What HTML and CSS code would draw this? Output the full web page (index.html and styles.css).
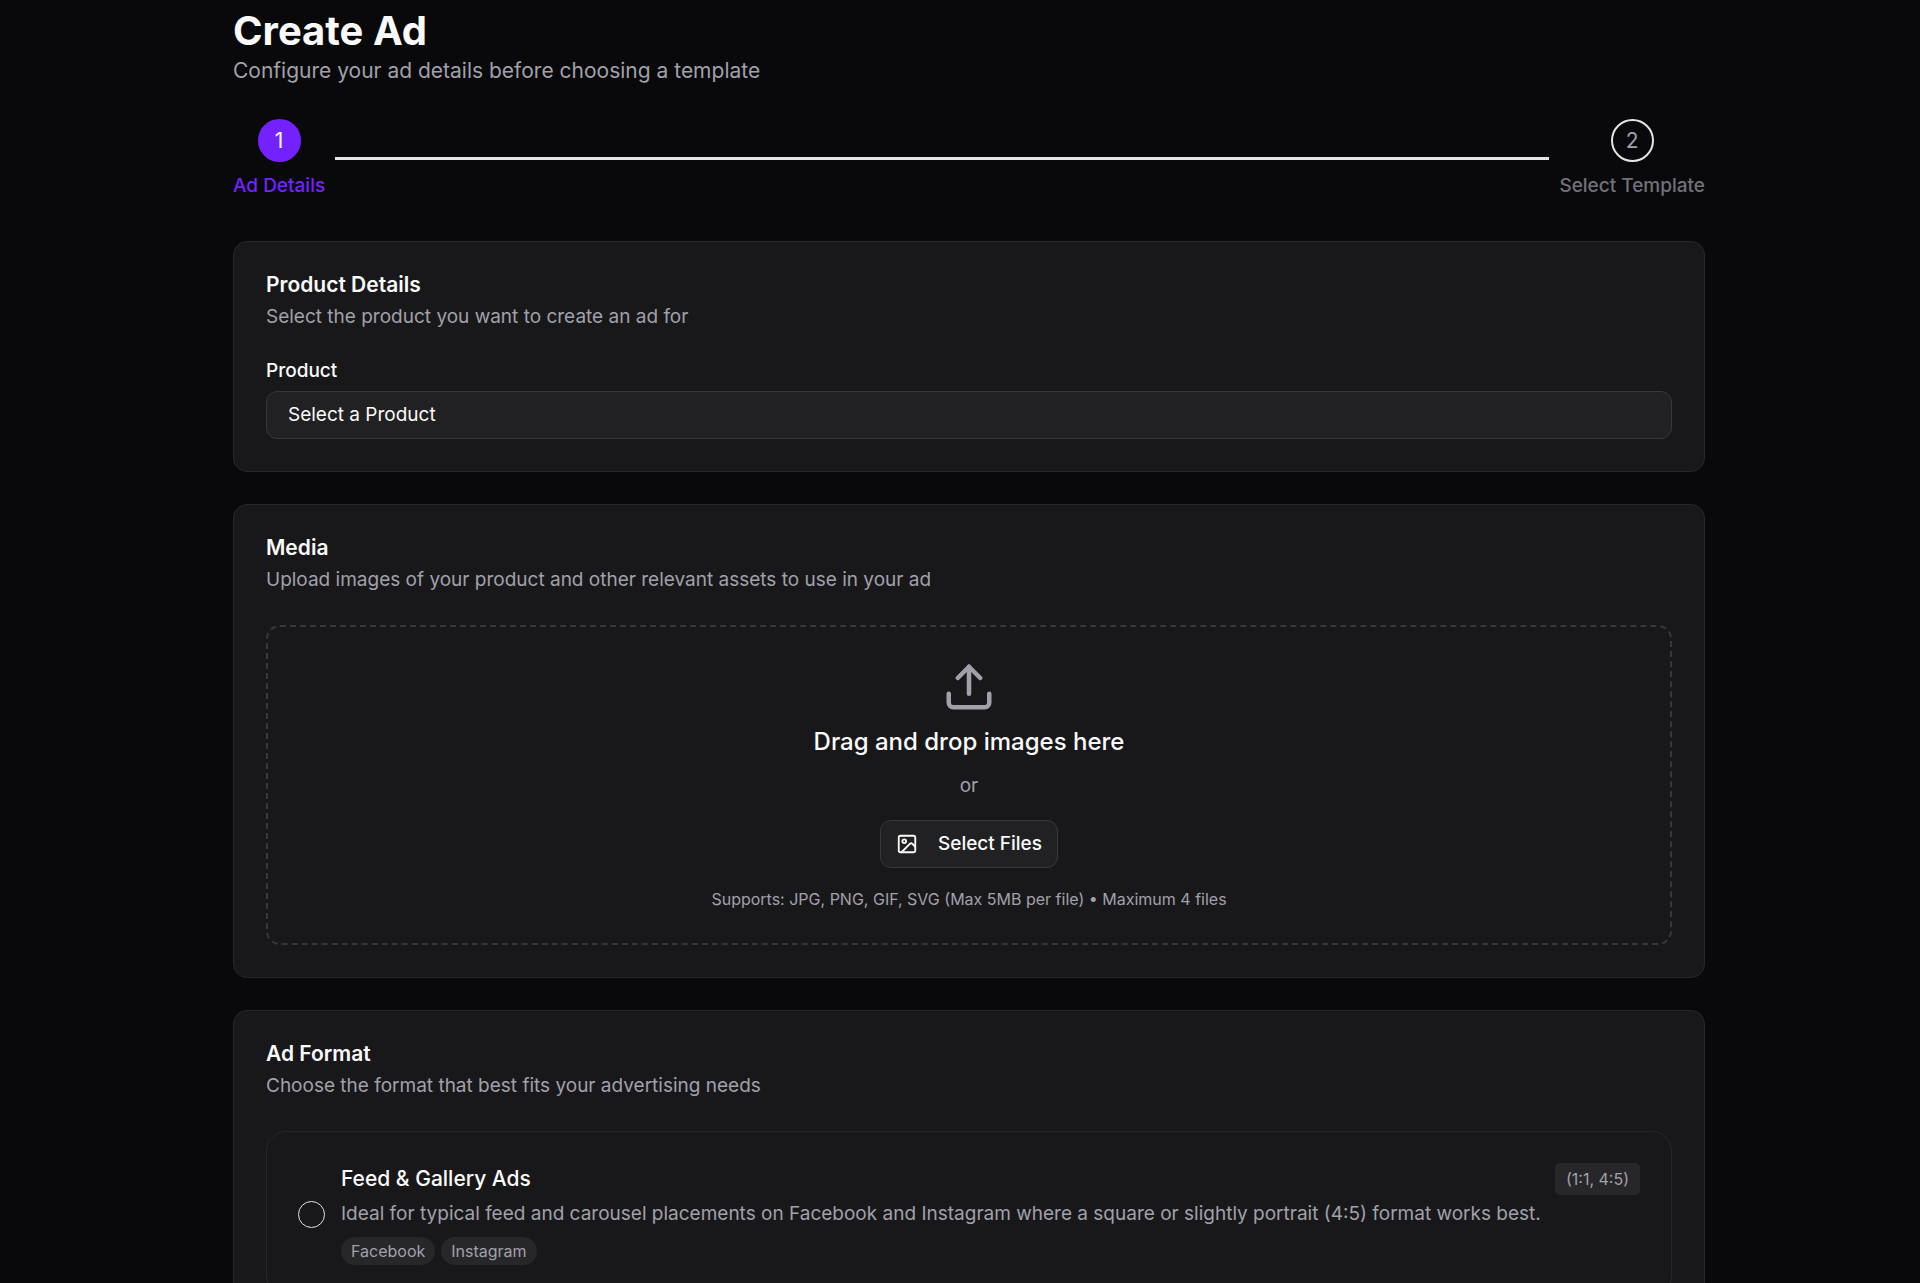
FILE: index.html
```html
<!DOCTYPE html>
<html lang="en">
<head>
    <meta charset="UTF-8">
    <meta name="viewport" content="width=device-width, initial-scale=1.0">
    <title>Create Ad</title>
    <link rel="stylesheet" href="styles.css">
</head>
<body>
    <main class="page">
        <header class="page-header">
            <h1>Create Ad</h1>
            <p>Configure your ad details before choosing a template</p>
        </header>

        <ol class="steps">
            <li class="step active">
                <span class="step-number">1</span>
                <span class="step-label">Ad Details</span>
            </li>
            <li class="step-line" aria-hidden="true"></li>
            <li class="step">
                <span class="step-number">2</span>
                <span class="step-label">Select Template</span>
            </li>
        </ol>

        <form class="cards">
            <section class="card">
                <h2>Product Details</h2>
                <p class="card-text">Select the product you want to create an ad for</p>
                <label class="field-label" for="product">Product</label>
                <select id="product" class="select">
                    <option>Select a Product</option>
                </select>
            </section>

            <section class="card">
                <h2>Media</h2>
                <p class="card-text">Upload images of your product and other relevant assets to use in your ad</p>
                <div class="dropzone">
                    <svg class="upload-icon" viewBox="0 0 24 24" aria-hidden="true">
                        <path d="M21 15v4a2 2 0 0 1-2 2H5a2 2 0 0 1-2-2v-4"/>
                        <path d="M17 8l-5-5-5 5"/>
                        <path d="M12 3v12"/>
                    </svg>
                    <h3>Drag and drop images here</h3>
                    <p class="or">or</p>
                    <button type="button" class="button">
                        <svg class="button-icon" viewBox="0 0 24 24" aria-hidden="true">
                            <rect x="3" y="3" width="18" height="18" rx="2"/>
                            <circle cx="9" cy="9" r="2"/>
                            <path d="M21 15l-3.1-3.1a2 2 0 0 0-2.8 0L6 21"/>
                        </svg>
                        Select Files
                    </button>
                    <p class="hint">Supports: JPG, PNG, GIF, SVG (Max 5MB per file) • Maximum 4 files</p>
                </div>
            </section>

            <section class="card">
                <h2>Ad Format</h2>
                <p class="card-text">Choose the format that best fits your advertising needs</p>
                <div class="format">
                    <input type="radio" id="feed" name="format" class="radio">
                    <div class="format-body">
                        <div class="format-top">
                            <label for="feed">Feed &amp; Gallery Ads</label>
                            <span class="ratio">(1:1, 4:5)</span>
                        </div>
                        <p>Ideal for typical feed and carousel placements on Facebook and Instagram where a square or slightly portrait (4:5) format works best.</p>
                        <div class="tags">
                            <span class="tag">Facebook</span>
                            <span class="tag">Instagram</span>
                        </div>
                    </div>
                </div>
            </section>
        </form>
    </main>
</body>
</html>
```
FILE: styles.css
```css
* {
    box-sizing: border-box;
}

body {
    margin: 0;
    padding-left: 18px;
    background: #09090b;
    color: #fafafa;
    font-family: Inter, sans-serif;
    font-size: 19px;
    line-height: 28px;
}

h1, h2, h3, p {
    margin: 0;
}

.page {
    max-width: 1472px;
    margin: 0 auto;
    padding: 7px 0 32px;
}

/* Header */
h1 {
    font-size: 40px;
    line-height: 48px;
    font-weight: 700;
}

.page-header p {
    font-size: 21px;
    line-height: 32px;
    color: #a1a1aa;
}

/* Steps */
.steps {
    display: flex;
    align-items: center;
    gap: 10px;
    margin: 32px 0 43px;
    padding: 0;
    list-style: none;
}

.step {
    display: flex;
    flex-direction: column;
    align-items: center;
    gap: 12px;
    color: #71717a;
}

.step-number {
    display: flex;
    align-items: center;
    justify-content: center;
    width: 43px;
    height: 43px;
    border: 2px solid #e4e4e7;
    border-radius: 50%;
    font-size: 21px;
    color: #a1a1aa;
}

.active {
    color: #7322ff;
}

.active .step-number {
    border-color: #7322ff;
    background: #7322ff;
    color: #fff;
}

.step-label {
    line-height: 24px;
    font-weight: 500;
}

.step-line {
    flex: 1;
    height: 3px;
    background: #e4e4e7;
}

/* Cards */
.cards {
    display: flex;
    flex-direction: column;
    gap: 32px;
}

.card {
    padding: 31px 32px 32px;
    border: 1px solid #27272a;
    border-radius: 14px;
    background: #18181b;
}

h2 {
    font-size: 21px;
    line-height: 24px;
    font-weight: 600;
}

.card-text {
    margin-top: 6px;
    color: #a1a1aa;
}

.field-label {
    display: block;
    margin: 26px 0 6px;
    font-weight: 500;
}

.select {
    display: block;
    width: 100%;
    height: 48px;
    padding: 0 21px;
    border: 1px solid #37373a;
    border-radius: 11px;
    appearance: none;
    background: #212123;
    color: #fafafa;
    font: inherit;
}

/* Upload area */
.dropzone {
    display: flex;
    flex-direction: column;
    align-items: center;
    margin-top: 31px;
    padding: 33px 32px 32px;
    border: 2px dashed #37373a;
    border-radius: 14px;
    color: #a1a1aa;
}

svg {
    fill: none;
    stroke: currentColor;
    stroke-width: 2;
    stroke-linecap: round;
    stroke-linejoin: round;
}

.upload-icon {
    width: 54px;
    height: 54px;
}

h3 {
    margin-top: 12px;
    font-size: 24px;
    line-height: 32px;
    font-weight: 500;
    color: #fafafa;
}

.or {
    margin: 14px 0 20px;
}

.button {
    display: flex;
    align-items: center;
    gap: 20px;
    height: 48px;
    padding: 0 15px;
    border: 1px solid #37373a;
    border-radius: 11px;
    background: #212123;
    color: #fafafa;
    font: inherit;
    font-weight: 500;
}

.button-icon {
    width: 22px;
    height: 22px;
}

.hint {
    margin-top: 19px;
    font-size: 16px;
    line-height: 24px;
}

/* Ad format */
.format {
    display: flex;
    align-items: center;
    gap: 16px;
    margin-top: 31px;
    padding: 31px;
    border: 1px solid #27272a;
    border-radius: 20px;
}

.radio {
    flex: none;
    width: 27px;
    height: 27px;
    margin: 0;
    border: 1px solid #e4e4e7;
    border-radius: 50%;
    appearance: none;
}

.radio:checked {
    background: #7322ff;
}

.format-body {
    flex: 1;
    color: #a1a1aa;
}

.format-top {
    display: flex;
    align-items: center;
    justify-content: space-between;
    margin-bottom: 5px;
}

.format-top label {
    font-size: 21px;
    font-weight: 500;
    color: #fafafa;
}

.ratio {
    padding: 2px 11px;
    border-radius: 5px;
    background: #27272a;
    font-size: 16px;
}

.tags {
    display: flex;
    gap: 6px;
    margin-top: 9px;
}

.tag {
    padding: 0 10px;
    border-radius: 14px;
    background: #27272a;
    font-size: 16px;
}
```
